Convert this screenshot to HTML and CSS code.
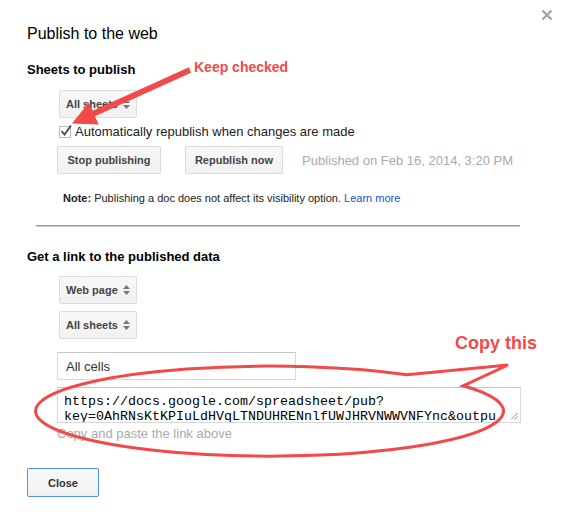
FILE: index.html
```html
<!DOCTYPE html>
<html>
<head>
<meta charset="utf-8">
<title>Publish to the web</title>
<link rel="stylesheet" href="styles.css">
</head>
<body>
<div class="dialog">
  <div class="close-x" aria-label="Close">
    <svg width="12" height="12" viewBox="0 0 12 12"><path d="M1.5 1.5L10.5 10.5M10.5 1.5L1.5 10.5" stroke="#a0a0a0" stroke-width="2.2" fill="none"/></svg>
  </div>
  <h1 class="title">Publish to the web</h1>
  <h2 class="heading">Sheets to publish</h2>
  <div class="indent">
    <div class="select">All sheets
      <svg class="updown" width="7" height="10" viewBox="0 0 7 10"><path d="M3.5 0L7 4H0Z M0 6H7L3.5 10Z" fill="#777"/></svg>
    </div>
    <div class="check">
      <span class="box"><svg width="14" height="14" viewBox="0 0 14 14"><path d="M2.5 7L5.5 10.5L12 1.5" stroke="#4a4a4a" stroke-width="1.8" fill="none"/></svg></span>
      <span>Automatically republish when changes are made</span>
    </div>
    <div class="btn-row">
      <div class="btn btn-stop">Stop publishing</div>
      <div class="btn btn-repub">Republish now</div>
      <span class="published">Published on Feb 16, 2014, 3:20 PM</span>
    </div>
    <p class="note"><b>Note:</b> Publishing a doc does not affect its visibility option. <a class="link">Learn more</a></p>
  </div>
  <div class="sep"></div>
  <h2 class="heading heading2">Get a link to the published data</h2>
  <div class="indent">
    <div class="select select-first">Web page
      <svg class="updown" width="7" height="10" viewBox="0 0 7 10"><path d="M3.5 0L7 4H0Z M0 6H7L3.5 10Z" fill="#777"/></svg>
    </div>
    <div class="select select-next">All sheets
      <svg class="updown" width="7" height="10" viewBox="0 0 7 10"><path d="M3.5 0L7 4H0Z M0 6H7L3.5 10Z" fill="#777"/></svg>
    </div>
    <div class="cells">All cells</div>
    <div class="url">https://docs.google.com/spreadsheet/pub?<wbr>key=0AhRNsKtKPIuLdHVqLTNDUHRENnlfUWJHRVNWWVNFYnc&amp;output=html
      <svg class="grip" width="8" height="8" viewBox="0 0 8 8"><path d="M7.5 1L1 7.5M7.5 4.5L4.5 7.5" stroke="#8a8a8a" stroke-width="1" fill="none"/></svg>
    </div>
    <div class="hint">Copy and paste the link above</div>
  </div>
  <div class="btn btn-close">Close</div>

  <svg class="annot" width="562" height="512" viewBox="0 0 562 512">
    <polygon points="189,67.3 191,72.7 94.9,116.2 98.8,124.4 72,123.5 88.8,102.6 92.7,110.8" fill="#f24a48"/>
    <path d="M407 374.7L508 365L463 385.8A234 45 0 1 1 407 374.7Z" fill="none" stroke="#f24a48" stroke-width="3" stroke-linejoin="miter"/>
  </svg>
  <div class="note-red keep">Keep checked</div>
  <div class="note-red copy">Copy this</div>
</div>
</body>
</html>
```
FILE: styles.css
```css
body {
  margin: 0;
  background: #fff;
  font-family: "Liberation Sans", Arial, sans-serif;
  color: #222;
}

.dialog {
  position: relative;
  width: 562px;
  height: 512px;
  box-sizing: border-box;
  padding: 24px 0 0 27px;
  overflow: hidden;
}

.close-x {
  position: absolute;
  top: 9px;
  left: 541px;
  width: 12px;
  height: 12px;
}
.close-x svg { display: block; }

.title {
  margin: 0;
  font-size: 16px;
  line-height: 20px;
  font-weight: normal;
  color: #000;
}

.heading {
  margin: 18px 0 0;
  font-size: 13px;
  line-height: 16px;
  font-weight: bold;
  color: #000;
}
.heading2 { margin-top: 22px; }

.indent {
  margin-left: 30px;
  display: flex;
  flex-direction: column;
  align-items: flex-start;
}

.select {
  margin: 12px 0 0 2px;
  height: 28px;
  box-sizing: border-box;
  display: flex;
  align-items: center;
  gap: 5px;
  padding: 0 6px 0 6px;
  border: 1px solid #dcdcdc;
  border-radius: 2px;
  background: linear-gradient(#f8f8f8, #f1f1f1);
  font-size: 11px;
  font-weight: bold;
  color: #444;
  white-space: nowrap;
}
.select-first { margin-top: 11px; }
.select-next { margin-top: 7px; }
.updown { display: block; }

.check {
  margin: 6px 0 0 2px;
  height: 16px;
  display: flex;
  align-items: center;
  gap: 4px;
  font-size: 13px;
  line-height: 16px;
  color: #222;
}
.box {
  position: relative;
  width: 10px;
  height: 10px;
  border: 1px solid #b8b8b8;
  border-radius: 1px;
  background: #fff;
}
.box svg {
  position: absolute;
  left: -1px;
  top: -3px;
}

.btn-row {
  margin-top: 6px;
  display: flex;
  align-items: center;
}
.btn {
  height: 28px;
  box-sizing: border-box;
  display: flex;
  align-items: center;
  justify-content: center;
  padding: 0 10px;
  border: 1px solid #d9d9d9;
  border-radius: 2px;
  background: linear-gradient(#f8f8f8, #f1f1f1);
  font-size: 11px;
  font-weight: bold;
  color: #444;
  white-space: nowrap;
}
.btn-stop { width: 104px; }
.btn-repub { width: 98px; margin-left: 24px; }
.published {
  margin-left: 19px;
  font-size: 13px;
  color: #aaa;
  white-space: nowrap;
}

.note {
  margin: 17px 0 0;
  padding-left: 6px;
  font-size: 11px;
  line-height: 14px;
  color: #222;
}
.link { color: #15c; }

.sep {
  margin: 20px 0 0 9px;
  width: 484px;
  height: 0;
  border-top: 1px solid #999;
  border-bottom: 1px solid #d0d0d0;
}

.cells {
  margin-top: 13px;
  width: 239px;
  height: 28px;
  box-sizing: border-box;
  padding-left: 8px;
  display: flex;
  align-items: center;
  border: 1px solid #d9d9d9;
  border-top-color: #c6c6c6;
  font-size: 13px;
  color: #333;
}

.url {
  position: relative;
  margin-top: 7px;
  width: 464px;
  height: 36px;
  box-sizing: border-box;
  padding: 6px 20px 0 6px;
  border: 1px solid #d9d9d9;
  border-top-color: #c6c6c6;
  font-family: "Liberation Mono", "Courier New", monospace;
  font-size: 13.33px;
  line-height: 15px;
  color: #000;
  overflow: hidden;
  overflow-wrap: anywhere;
}
.grip {
  position: absolute;
  right: 2px;
  bottom: 2px;
}

.hint {
  margin-top: 3px;
  font-size: 13px;
  line-height: 16px;
  color: #aaa;
}

.btn-close {
  margin-top: 26px;
  width: 72px;
  height: 29px;
  border-color: #4d90fe;
  color: #333;
}

.annot {
  position: absolute;
  left: 0;
  top: 0;
  pointer-events: none;
}
.note-red {
  position: absolute;
  font-weight: bold;
  color: #f24a48;
  white-space: nowrap;
}
.keep {
  left: 194px;
  top: 59px;
  font-size: 14px;
  line-height: 16px;
}
.copy {
  left: 455px;
  top: 333px;
  font-size: 18px;
  line-height: 21px;
}
```
